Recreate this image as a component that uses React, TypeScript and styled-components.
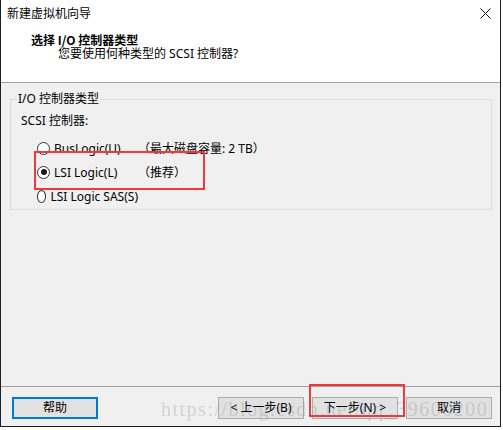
import React from "react";
import styled, { createGlobalStyle } from "styled-components";

const Global = createGlobalStyle`
  html, body { margin: 0; padding: 0; background: #ffffff; }
  body {
    font-family: "Noto Sans", "Noto Sans CJK SC", sans-serif;
    font-size: 12px;
    color: #000;
  }
`;

const Window = styled.div`
  position: relative;
  box-sizing: border-box;
  width: 501px;
  height: 427px;
  border-left: 1px solid #1e1e1e;
  border-right: 1px solid #1e1e1e;
  border-bottom: 1px solid #1e1e1e;
  background: #f0f0f0;
  display: flex;
  flex-direction: column;
  overflow: hidden;
`;

const TitleBar = styled.div`
  height: 26px;
  background: #ffffff;
  display: flex;
  align-items: center;
  justify-content: space-between;
  padding: 0 9px 0 6px;
`;

const TitleText = styled.span`
  font-family: "Noto Sans CJK SC", sans-serif;
  font-size: 12px;
  line-height: 26px;
`;

const Header = styled.div`
  background: #ffffff;
  border-bottom: 1px solid #a0a0a0;
  padding-top: 7px;
  box-sizing: content-box;
  height: 49px;
`;

const HeaderTitle = styled.div`
  font-family: "Noto Sans CJK SC", sans-serif;
  font-weight: 700;
  font-size: 12px;
  line-height: 14px;
  padding-left: 30px;
`;

const HeaderSub = styled.div`
  font-family: "Noto Sans", "Noto Sans CJK SC", sans-serif;
  font-size: 12px;
  line-height: 14px;
  padding-left: 57px;
`;

const Body = styled.div`
  border-bottom: 1px solid #a0a0a0;
  padding-top: 9px;
  box-sizing: border-box;
  height: 304px;
`;

const Group = styled.fieldset`
  margin: 0 0 0 9px;
  width: 482px;
  box-sizing: border-box;
  border: 1px solid #dcdcdc;
  padding: 0 0 1px 6px;
  min-width: 0;
`;

const Legend = styled.legend`
  padding: 0 1px;
  font-size: 12px;
  line-height: 14px;
`;

const FieldLabel = styled.div`
  margin: 8px 0 0 4px;
  line-height: 14px;
`;

const Options = styled.div`
  margin: 8px 0 0 20px;
  display: flex;
  flex-direction: column;
`;

const OptionRow = styled.div`
  height: 24px;
  display: grid;
  grid-template-columns: 101px auto;
  align-items: center;
`;

const RadioLabel = styled.label`
  display: flex;
  align-items: center;
  gap: 4px;
  white-space: nowrap;
`;

const RadioCircle = styled.span<{ $checked?: boolean }>`
  box-sizing: border-box;
  width: 13px;
  height: 13px;
  border-radius: 50%;
  border: 1px solid #333333;
  background: #ffffff;
  display: flex;
  align-items: center;
  justify-content: center;
  &::after {
    content: "";
    display: ${(p) => (p.$checked ? "block" : "none")};
    width: 6px;
    height: 6px;
    border-radius: 50%;
    background: #1a1a1a;
  }
`;

const Note = styled.span`
  white-space: nowrap;
`;

const Spacer = styled.div`
  flex: 1;
`;

const Footer = styled.div`
  flex: 1;
  display: flex;
  align-items: flex-start;
  padding: 10px 8px 0 11px;
`;

const ButtonGroup = styled.div`
  display: flex;
  gap: 8px;
`;

const Button = styled.button<{ $default?: boolean }>`
  box-sizing: border-box;
  width: 86px;
  height: 22px;
  margin: 0;
  padding: 0;
  background: #e1e1e1;
  border: ${(p) => (p.$default ? "2px solid #0078d7" : "1px solid #adadad")};
  font-family: "Noto Sans", "Noto Sans CJK SC", sans-serif;
  font-size: 12px;
  color: #000;
  line-height: 18px;
`;

const Highlight = styled.div`
  position: absolute;
  box-sizing: border-box;
  border: 2px solid #ee3a3a;
  pointer-events: none;
`;

const Watermark = styled.div`
  position: absolute;
  left: 160px;
  top: 399px;
  font-family: "Liberation Serif", serif;
  font-size: 20px;
  line-height: 20px;
  letter-spacing: 1.5px;
  color: rgba(110, 110, 110, 0.24);
  white-space: nowrap;
  pointer-events: none;
`;

const CloseIcon = () => (
  <svg width="11" height="11" viewBox="0 0 11 11">
    <path d="M0.5 0.5 L10.5 10.5 M10.5 0.5 L0.5 10.5" stroke="#111" strokeWidth="1" fill="none" />
  </svg>
);

type Opt = { label: string; note?: string; checked?: boolean };
const options: Opt[] = [
  { label: "BusLogic(U)", note: "（最大磁盘容量: 2 TB）" },
  { label: "LSI Logic(L)", note: "（推荐）", checked: true },
  { label: "LSI Logic SAS(S)" },
];

export default function App() {
  return (
    <>
      <Global />
      <Window>
        <TitleBar>
          <TitleText>新建虚拟机向导</TitleText>
          <CloseIcon />
        </TitleBar>
        <Header>
          <HeaderTitle>选择 I/O 控制器类型</HeaderTitle>
          <HeaderSub>您要使用何种类型的 SCSI 控制器?</HeaderSub>
        </Header>
        <Body>
          <Group>
            <Legend>I/O 控制器类型</Legend>
            <FieldLabel>SCSI 控制器:</FieldLabel>
            <Options>
              {options.map((o) => (
                <OptionRow key={o.label}>
                  <RadioLabel>
                    <RadioCircle $checked={o.checked} />
                    {o.label}
                  </RadioLabel>
                  {o.note ? <Note>{o.note}</Note> : <span />}
                </OptionRow>
              ))}
            </Options>
          </Group>
        </Body>
        <Footer>
          <Button $default>帮助</Button>
          <Spacer />
          <ButtonGroup>
            <Button>&lt; 上一步(B)</Button>
            <Button>下一步(N) &gt;</Button>
            <Button>取消</Button>
          </ButtonGroup>
        </Footer>
        <Highlight style={{ left: 33, top: 151, width: 171, height: 39 }} />
        <Highlight style={{ left: 308, top: 384, width: 96, height: 33 }} />
        <Watermark>https://blog.csdn.net/qq_39600200</Watermark>
      </Window>
    </>
  );
}
